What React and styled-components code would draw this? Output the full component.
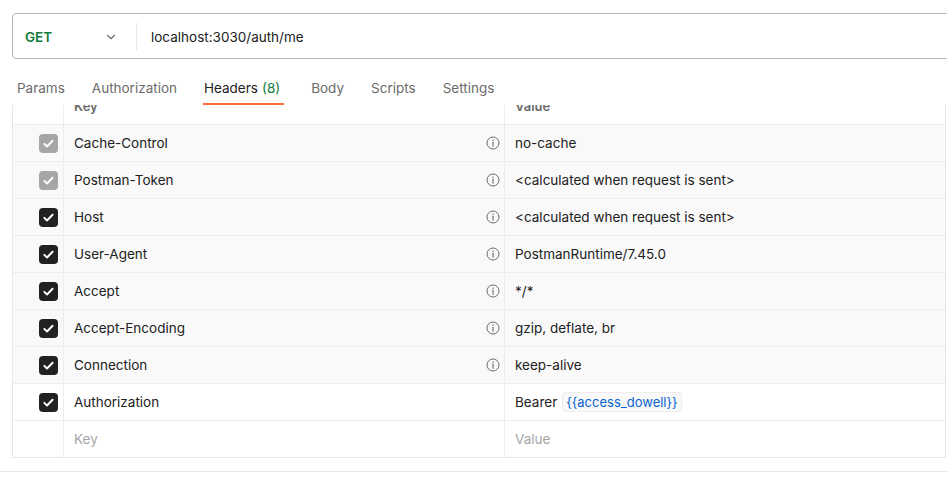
import styled, { createGlobalStyle } from "styled-components";

const GlobalStyle = createGlobalStyle`
html, body {
  margin: 0;
  padding: 0;
  background: #ffffff;
  overflow: hidden;
}
body {
  font-family: Inter, "Noto Sans", sans-serif;
  color: #212121;
}
`;

const Page = styled.div`
width: 947px;
height: 483px;
padding-top: 13px;
box-sizing: border-box;
overflow: hidden;
`;

const UrlBar = styled.div`
margin-left: 12px;
margin-right: -20px;
height: 46px;
box-sizing: border-box;
border: 1px solid #b8b8b8;
border-radius: 4px;
display: flex;
align-items: center;
padding-top: 1px;
`;

const Method = styled.div`
width: 123px;
height: 100%;
box-sizing: border-box;
padding: 0 18px 0 12px;
display: flex;
align-items: center;
justify-content: space-between;
font-size: 13.5px;
font-weight: 600;
color: #0f7b3c;
`;

const Divider = styled.div`
width: 1px;
height: 27px;
background: #e6e6e6;
`;

const UrlText = styled.div`
padding-left: 14px;
font-size: 13.5px;
color: #212121;
`;

const Tabs = styled.div`
margin-top: 3px;
height: 43px;
padding-left: 17px;
display: flex;
align-items: flex-end;
gap: 27px;
background: #ffffff;
`;

const Tab = styled.div`
height: 100%;
box-sizing: border-box;
display: flex;
align-items: flex-end;
padding-bottom: 5px;
line-height: 20px;
font-size: 13.5px;
color: ${props => props.active ? '#212121' : '#6b6b6b'};
border-bottom: 2px solid ${props => props.active ? '#ff6c37' : 'transparent'};
margin-left: ${props => props.active ? '-1px' : '0'};
padding-right: ${props => props.active ? '4px' : '0'};
padding-left: ${props => props.active ? '1px' : '0'};
`;

const Count = styled.span`
color: #0f7b3c;
margin-left: 4px;
`;

const Table = styled.div`
margin-left: 12px;
margin-right: 1px;
border-left: 1px solid #e6e6e6;
border-right: 1px solid #e6e6e6;
border-bottom: 1px solid #e6e6e6;
`;

const Row = styled.div`
display: grid;
grid-template-columns: 51px 441px 1fr;
height: ${props => props.head ? '20px' : props.last ? '36px' : '37px'};
box-sizing: border-box;
border-bottom: ${props => props.last ? 'none' : '1px solid #ededed'};
background: ${props => props.muted ? '#f9f9f9' : '#ffffff'};
overflow: hidden;
`;

const Cell = styled.div`
display: flex;
align-items: center;
box-sizing: border-box;
border-right: ${props => props.end ? 'none' : '1px solid #ededed'};
padding: 0 10px;
font-size: 13.5px;
justify-content: ${props => props.split ? 'space-between' : 'flex-start'};
`;

const CheckCell = styled(Cell)`
justify-content: flex-end;
padding: 0 5px 0 0;
`;

const HeadText = styled.div`
margin-top: -17px;
line-height: 37px;
font-size: 13px;
font-weight: 600;
color: #6b6b6b;
`;

const HeadCell = styled.div`
box-sizing: border-box;
border-right: ${props => props.end ? 'none' : '1px solid #ededed'};
padding: 0 10px;
overflow: hidden;
`;

const Box = styled.div`
width: 19px;
height: 19px;
box-sizing: border-box;
border-radius: 4px;
background: ${props => props.muted ? '#a6a6a6' : '#212121'};
display: flex;
align-items: center;
justify-content: center;
`;

const Placeholder = styled.span`
color: #a6a6a6;
`;

const Variable = styled.span`
margin-left: 5px;
padding: 1px 3px;
border: 1px solid #ededed;
border-radius: 4px;
background: #f9f9f9;
color: #0a63cf;
font-size: 13px;
`;

const InfoWrap = styled.span`
display: flex;
align-items: center;
margin-right: -6px;
`;

const Footer = styled.div`
margin-top: 13px;
border-top: 1px solid #e6e6e6;
height: 40px;
padding-left: 107px;
padding-top: 9px;
box-sizing: border-box;
`;

const Chevron = () => (
    <svg width="14" height="14" viewBox="0 0 16 16" fill="none">
        <path d="M4 6l4 4 4-4" stroke="#6b6b6b" strokeWidth="1.3" strokeLinecap="round" strokeLinejoin="round" />
    </svg>
);

const Check = () => (
    <svg width="13" height="13" viewBox="0 0 14 14" fill="none">
        <path d="M2.5 7.4l2.9 2.8 6-6.2" stroke="#ffffff" strokeWidth="2.1" strokeLinecap="round" strokeLinejoin="round" />
    </svg>
);

const Info = () => (
    <svg width="14" height="14" viewBox="0 0 14 14" fill="none">
        <circle cx="7" cy="7" r="6" stroke="#6b6b6b" strokeWidth="1" />
        <path d="M7 6.2v4" stroke="#6b6b6b" strokeWidth="1.1" strokeLinecap="round" />
        <circle cx="7" cy="4.2" r="0.75" fill="#6b6b6b" />
    </svg>
);

const headers = [
    { key: 'Cache-Control', value: 'no-cache', auto: true },
    { key: 'Postman-Token', value: '<calculated when request is sent>', auto: true },
    { key: 'Host', value: '<calculated when request is sent>' },
    { key: 'User-Agent', value: 'PostmanRuntime/7.45.0' },
    { key: 'Accept', value: '*/*' },
    { key: 'Accept-Encoding', value: 'gzip, deflate, br' },
    { key: 'Connection', value: 'keep-alive' },
];

const tabs = ['Params', 'Authorization', 'Headers', 'Body', 'Scripts', 'Settings'];

const App = () => {
    return (
        <Page>
            <GlobalStyle />
            <UrlBar>
                <Method>
                    GET
                    <Chevron />
                </Method>
                <Divider />
                <UrlText>localhost:3030/auth/me</UrlText>
            </UrlBar>
            <Tabs>
                {tabs.map(t => (
                    <Tab key={t} active={t === 'Headers'}>
                        {t}
                        {t === 'Headers' && <Count>(8)</Count>}
                    </Tab>
                ))}
            </Tabs>
            <Table>
                <Row head>
                    <HeadCell />
                    <HeadCell><HeadText>Key</HeadText></HeadCell>
                    <HeadCell end><HeadText>Value</HeadText></HeadCell>
                </Row>
                {headers.map(h => (
                    <Row key={h.key} muted>
                        <CheckCell>
                            <Box muted={h.auto}><Check /></Box>
                        </CheckCell>
                        <Cell split>
                            {h.key}
                            <InfoWrap><Info /></InfoWrap>
                        </Cell>
                        <Cell end>{h.value}</Cell>
                    </Row>
                ))}
                <Row>
                    <CheckCell>
                        <Box><Check /></Box>
                    </CheckCell>
                    <Cell>Authorization</Cell>
                    <Cell end>
                        Bearer
                        <Variable>{'{{access_dowell}}'}</Variable>
                    </Cell>
                </Row>
                <Row last>
                    <CheckCell />
                    <Cell><Placeholder>Key</Placeholder></Cell>
                    <Cell end><Placeholder>Value</Placeholder></Cell>
                </Row>
            </Table>
            <Footer>
                <svg width="12" height="12" viewBox="0 0 12 12" fill="none">
                    <circle cx="6" cy="6" r="5" stroke="#6b6b6b" strokeWidth="1.2" />
                </svg>
            </Footer>
        </Page>
    );
};

export default App;
